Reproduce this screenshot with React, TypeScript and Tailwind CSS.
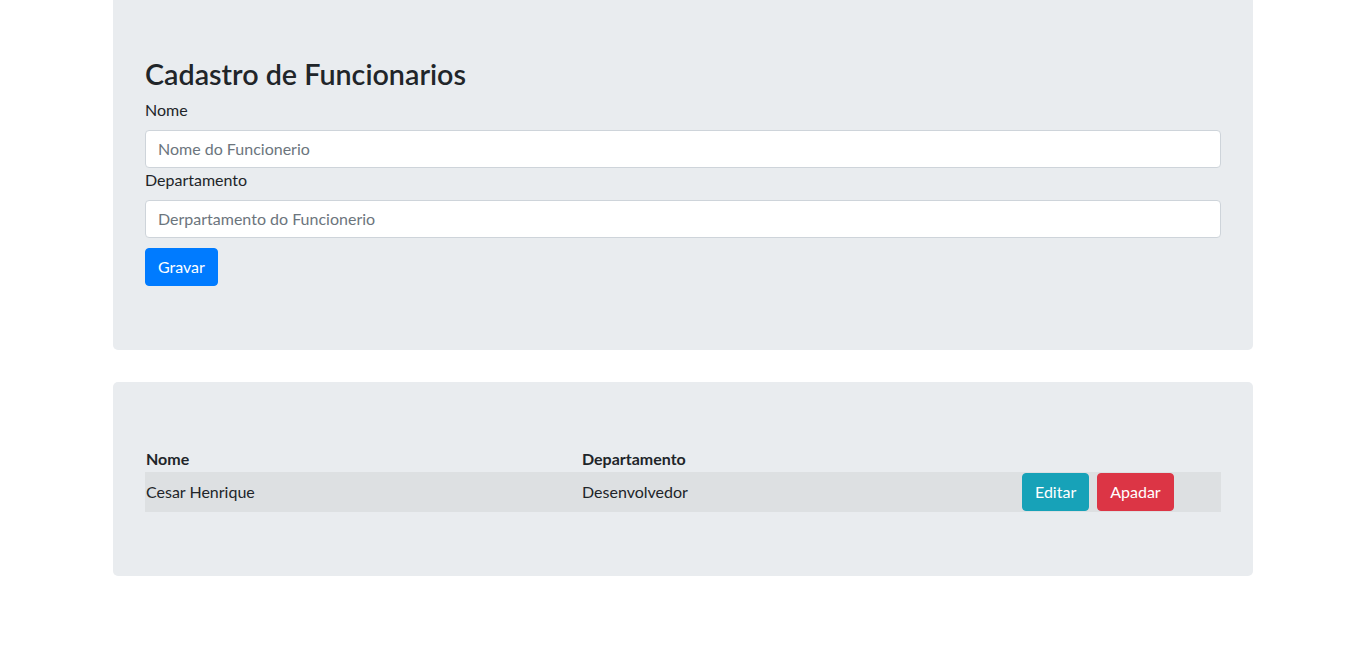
const funcionarios = [{ nome: "Cesar Henrique", departamento: "Desenvolvedor" }];

const App = () => {
	return (
		<div className="min-h-screen bg-white text-[#212529] text-base leading-6 font-['Segoe_UI','Lato',sans-serif]">
			<div className="ml-[113px] w-[1140px]">
				{/* Formulario */}
				<div className="bg-[#e9ecef] rounded-b-[5px] px-8 pt-14 pb-16 mb-8">
					<h3 className="text-[28.7px] leading-[33.6px] font-semibold pt-[2px] mb-[6px]">Cadastro de Funcionarios</h3>
					<label className="block mb-2">Nome</label>
					<input
						className="block w-full h-[38px] px-3 bg-white border border-[#ced4da] rounded placeholder:text-[#6c757d] outline-none"
						placeholder="Nome do Funcionerio"
					/>
					<label className="block mb-2">Departamento</label>
					<input
						className="block w-full h-[38px] px-3 bg-white border border-[#ced4da] rounded placeholder:text-[#6c757d] outline-none"
						placeholder="Derpartamento do Funcionerio"
					/>
					<button className="mt-2.5 h-[38px] px-3 bg-[#007bff] text-white rounded border border-[#007bff]">
						Gravar
					</button>
				</div>

				{/* Lista */}
				<div className="bg-[#e9ecef] rounded-[5px] px-8 py-16">
					<table className="w-full border-collapse">
						<thead>
							<tr className="text-left">
								<th className="w-[436px] p-px font-bold">Nome</th>
								<th className="w-[440px] p-px font-bold">Departamento</th>
								<th className="p-px"></th>
							</tr>
						</thead>
						<tbody>
							{funcionarios.map((f, _indx) => (
								<tr key={_indx} className="bg-black/5">
									<td className="p-px">{f.nome}</td>
									<td className="p-px">{f.departamento}</td>
									<td className="p-px">
										<div className="flex gap-2">
											<button className="h-[38px] px-3 bg-[#17a2b8] text-white rounded border border-[#17a2b8]">
												Editar
											</button>
											<button className="h-[38px] px-3 bg-[#dc3545] text-white rounded border border-[#dc3545]">
												Apadar
											</button>
										</div>
									</td>
								</tr>
							))}
						</tbody>
					</table>
				</div>
			</div>
		</div>
	);
};

export default App;
